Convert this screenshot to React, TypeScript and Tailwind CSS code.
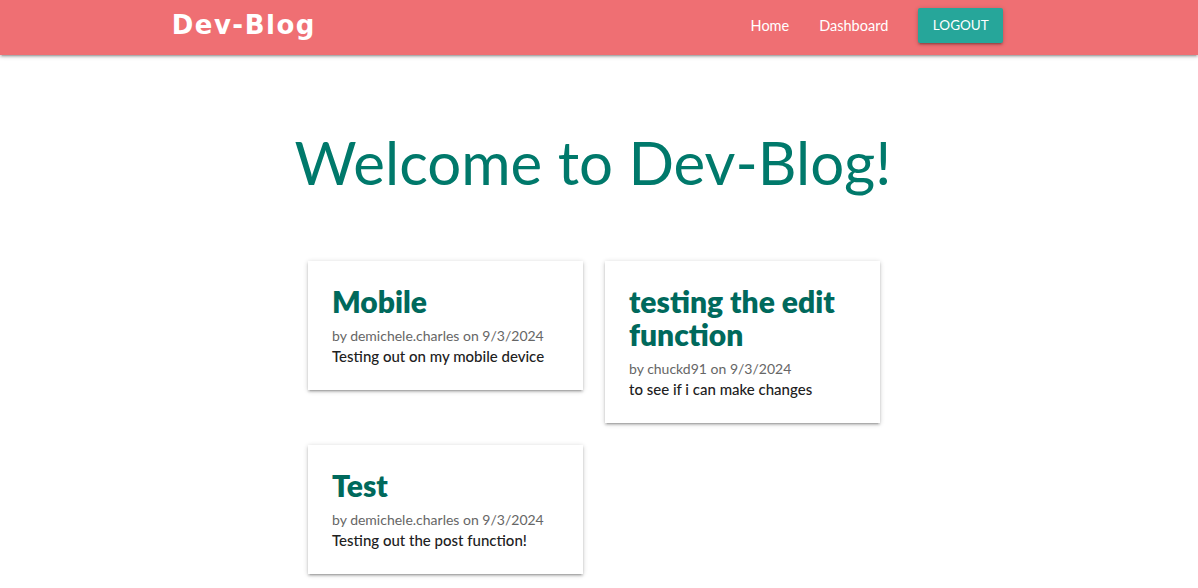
import React from "react";

const posts = [
  {
    id: 1,
    title: "Mobile",
    author: "demichele.charles",
    date: "9/3/2024",
    body: "Testing out on my mobile device",
  },
  {
    id: 2,
    title: "testing the edit function",
    author: "chuckd91",
    date: "9/3/2024",
    body: "to see if i can make changes",
  },
  {
    id: 3,
    title: "Test",
    author: "demichele.charles",
    date: "9/3/2024",
    body: "Testing out the post function!",
  },
];

function PostCard({ post }: { post: (typeof posts)[number] }) {
  return (
    <div className="bg-white px-6 pt-6 pb-[23px] shadow-[0_2px_2px_0_rgba(0,0,0,0.14),0_3px_1px_-2px_rgba(0,0,0,0.12),0_1px_5px_0_rgba(0,0,0,0.2)]">
      <h2 className="text-[30px] leading-[33px] font-extrabold text-[#00695c]">
        {post.title}
      </h2>
      <p className="mt-[7px] text-[14px] leading-[21px] text-[#666666]">
        by {post.author} on {post.date}
      </p>
      <p className="text-[15px] leading-[21px] font-medium text-[#212121]">
        {post.body}
      </p>
    </div>
  );
}

export default function App() {
  return (
    <div className="min-h-[588px] bg-white font-['Lato',sans-serif]">
      <nav className="h-[55px] bg-[#ef6f73] shadow-[0_2px_2px_0_rgba(0,0,0,0.14),0_3px_1px_-2px_rgba(0,0,0,0.12),0_1px_5px_0_rgba(0,0,0,0.2)]">
        <div className="mx-auto flex h-full w-[70%] items-center justify-between">
          <a className="-ml-[8px] -mt-[4px] text-[26px] font-bold tracking-[1.5px] text-white font-['DejaVu_Sans',sans-serif]">
            Dev-Blog
          </a>
          <ul className="-mt-[4px] flex items-center text-[14.5px] text-white">
            <li>
              <a className="px-[15px]">Home</a>
            </li>
            <li>
              <a className="px-[15px]">Dashboard</a>
            </li>
            <li className="px-[15px]">
              <button className="flex h-[35px] w-[85px] items-center justify-center rounded-[2px] bg-[#26a69a] text-[13.5px] uppercase text-white shadow-[0_2px_2px_0_rgba(0,0,0,0.14),0_3px_1px_-2px_rgba(0,0,0,0.12),0_1px_5px_0_rgba(0,0,0,0.2)]">
                Logout
              </button>
            </li>
          </ul>
        </div>
      </nav>

      <main className="pr-[12px]">
        <h1 className="mt-[69px] text-center text-[60px] leading-[76px] text-[#00796b]">
          Welcome to Dev-Blog!
        </h1>
        <div className="mt-[61px] grid grid-cols-[275px_275px] items-start justify-center gap-[22px] pl-[2px]">
          {posts.map((p) => (
            <PostCard key={p.id} post={p} />
          ))}
        </div>
      </main>
    </div>
  );
}
